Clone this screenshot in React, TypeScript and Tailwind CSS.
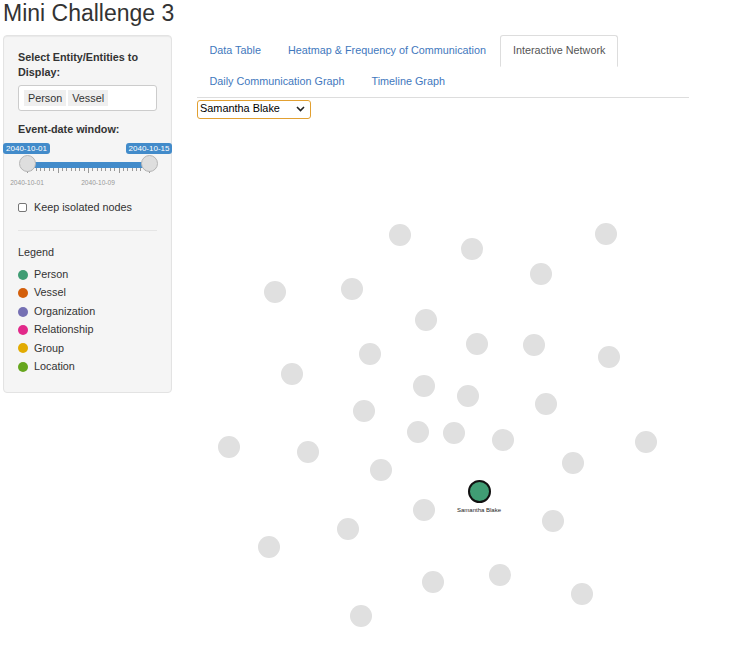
import React from "react";

const tabsRow = [
  { label: "Data Table", active: false },
  { label: "Heatmap & Frequency of Communication", active: false },
  { label: "Interactive Network", active: true },
  { label: "Daily Communication Graph", active: false },
  { label: "Timeline Graph", active: false },
];

const legend = [
  { label: "Person", color: "#409d74" },
  { label: "Vessel", color: "#d35f0b" },
  { label: "Organization", color: "#7570b3" },
  { label: "Relationship", color: "#e2298a" },
  { label: "Group", color: "#e2ab02" },
  { label: "Location", color: "#66a61e" },
];

// node centres in page coordinates
const nodes: [number, number][] = [
  [400, 235], [472, 249], [606, 234], [541, 274], [275, 292], [352, 289],
  [426, 320], [370, 354], [477, 344], [534, 345], [609, 357], [292, 374],
  [424, 386], [468, 396], [546, 404], [364, 411], [418, 432], [454, 433],
  [503, 440], [646, 442], [229, 447], [308, 452], [381, 470], [573, 463],
  [424, 510], [553, 521], [348, 529], [269, 547], [500, 575], [433, 582],
  [582, 594], [361, 616],
];
const focus: [number, number] = [479, 492];
const ORIGIN_X = 197;
const ORIGIN_Y = 119;

function Slider() {
  const ticks = Array.from({ length: 29 }, (_, i) => i);
  return (
    <div className="relative h-[52px]">
      <div className="absolute left-[-15px] top-[5px] w-[47px] h-[11px] rounded-[3px] bg-[#428bca] text-white text-[8px] leading-[11px] text-center">
        2040-10-01
      </div>
      <div className="absolute left-[108px] top-[5px] w-[46px] h-[11px] rounded-[3px] bg-[#428bca] text-white text-[8px] leading-[11px] text-center">
        2040-10-15
      </div>
      <div className="absolute left-[9px] w-[122px] top-[24px] h-[6px] bg-[#428bca]" />
      <div className="absolute left-[9px] w-[122px] top-[30px] h-[6px]">
        {ticks.map((i) => (
          <div
            key={i}
            className="absolute top-0 w-px bg-[#999]"
            style={{ left: (i * 122) / 28, height: i % 7 === 0 ? 5 : 3 }}
          />
        ))}
      </div>
      <div className="absolute left-[-20px] w-[58px] top-[37px] text-center text-[6.6px] text-[#999]">2040-10-01</div>
      <div className="absolute left-[51px] w-[58px] top-[37px] text-center text-[6.6px] text-[#999]">2040-10-09</div>
      <div className="absolute left-[0.5px] top-[17.5px] w-[17px] h-[17px] rounded-full bg-[#dedede] border border-[#b5b5b5]" />
      <div className="absolute left-[122.5px] top-[17.5px] w-[17px] h-[17px] rounded-full bg-[#dedede] border border-[#b5b5b5]" />
    </div>
  );
}

export default function App() {
  return (
    <div
      className="w-[752px] h-[658px] overflow-hidden bg-white text-[#333] text-[10.8px] leading-[15.4px]"
      style={{ fontFamily: '"Liberation Sans", Arial, sans-serif' }}
    >
      <h1 className="pl-[3px] pt-[1px] text-[23px] leading-[25px] font-normal">Mini Challenge 3</h1>

      <div className="flex mt-[9px]">
        <aside className="ml-[3px] w-[169px] h-[358px] bg-[#f5f5f5] border border-[#e3e3e3] rounded-[4px] px-[14px] pt-[13.5px] shadow-[inset_0_1px_1px_rgba(0,0,0,0.05)]">
          <label className="block font-bold">Select Entity/Entities to Display:</label>
          <div className="mt-[5px] h-[26px] bg-white border border-[#ccc] rounded-[3px] flex items-center gap-[2px] px-[5px]">
            <span className="bg-[#efefef] px-[4px] leading-[16px]">Person</span>
            <span className="bg-[#efefef] px-[4px] leading-[16px]">Vessel</span>
          </div>

          <label className="block font-bold mt-[11px]">Event-date window:</label>
          <Slider />

          <label className="flex items-center gap-[7px] mt-[10px]">
            <span className="w-[9px] h-[9px] border border-[#767676] rounded-[2px] bg-white" />
            <span>Keep isolated nodes</span>
          </label>

          <hr className="mt-[15px] border-0 border-t border-[#e5e5e5]" />

          <div className="mt-[14px]">Legend</div>
          <div className="mt-[5px] flex flex-col">
            {legend.map((l) => (
              <div key={l.label} className="h-[18.4px] flex items-center gap-[6px]">
                <span className="w-[10px] h-[10px] rounded-full" style={{ backgroundColor: l.color }} />
                <span>{l.label}</span>
              </div>
            ))}
          </div>
        </aside>

        <main className="ml-[25px] w-[492px]">
          <ul className="flex flex-wrap border-b border-[#ddd]">
            {tabsRow.map((t) => (
              <li key={t.label} className="-mb-px mr-[2px]">
                <a
                  className={
                    t.active
                      ? "block px-[11.5px] py-[7.2px] border border-[#ddd] border-b-transparent rounded-t-[3px] bg-white text-[#555]"
                      : "block px-[11.5px] py-[7.2px] border border-transparent text-[#3f78bd]"
                  }
                >
                  {t.label}
                </a>
              </li>
            ))}
          </ul>

          <div className="mt-[2px] w-[114px] h-[19px] border-[1.5px] border-[#e2a031] rounded-[3px] flex items-center justify-between pl-[2px] pr-[5px] text-black text-[10.9px]">
            <span>Samantha Blake</span>
            <svg width="9" height="6" viewBox="0 0 9 6">
              <path d="M1 1l3.5 3.5L8 1" fill="none" stroke="#222" strokeWidth="1.6" />
            </svg>
          </div>

          <div className="relative w-[492px] h-[539px]">
            {nodes.map(([x, y], i) => (
              <div
                key={i}
                className="absolute w-[22px] h-[22px] rounded-full bg-[#e0e0e0]"
                style={{ left: x - ORIGIN_X - 11, top: y - ORIGIN_Y - 11 }}
              />
            ))}
            <div
              className="absolute w-[23px] h-[23px] rounded-full bg-[#409d74] border-2 border-[#111]"
              style={{ left: focus[0] - ORIGIN_X - 11.5, top: focus[1] - ORIGIN_Y - 11.5 }}
            />
            <div
              className="absolute w-[60px] text-center text-[6px] leading-[8px] text-[#222]"
              style={{ left: focus[0] - ORIGIN_X - 30, top: focus[1] - ORIGIN_Y + 14 }}
            >
              Samantha Blake
            </div>
          </div>
        </main>
      </div>
    </div>
  );
}
